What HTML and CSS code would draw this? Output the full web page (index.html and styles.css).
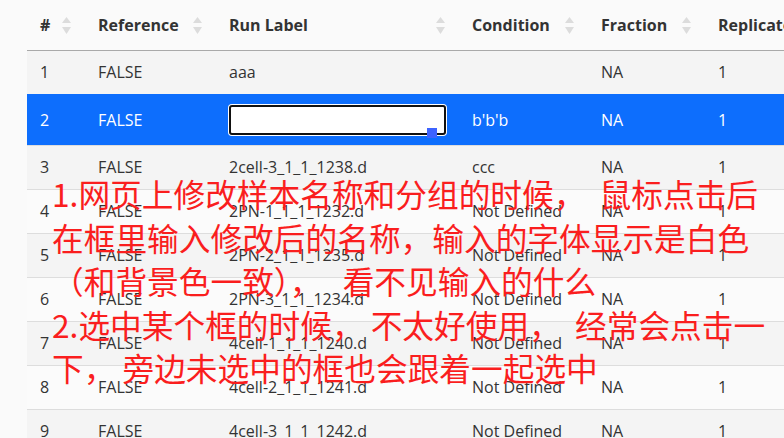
FILE: index.html
```html
<!DOCTYPE html>
<html lang="zh-CN">

<head>
    <meta charset="UTF-8">
    <meta name="viewport" content="width=device-width, initial-scale=1.0">
    <title>Sample Table</title>
    <link rel="stylesheet" href="styles.css">
</head>

<body>
    <div class="page">
        <table class="samples">
            <colgroup>
                <col class="c-num">
                <col class="c-ref">
                <col class="c-label">
                <col class="c-cond">
                <col class="c-frac">
                <col class="c-rep">
            </colgroup>
            <thead>
                <tr>
                    <th><div class="th-in"><span>#</span><svg class="sort" viewBox="0 0 9 18"><path d="M4.5 1 9 7H0z"/><path d="M0 11h9l-4.5 7z"/></svg></div></th>
                    <th><div class="th-in"><span>Reference</span><svg class="sort" viewBox="0 0 9 18"><path d="M4.5 1 9 7H0z"/><path d="M0 11h9l-4.5 7z"/></svg></div></th>
                    <th><div class="th-in"><span>Run Label</span><svg class="sort" viewBox="0 0 9 18"><path d="M4.5 1 9 7H0z"/><path d="M0 11h9l-4.5 7z"/></svg></div></th>
                    <th><div class="th-in"><span>Condition</span><svg class="sort" viewBox="0 0 9 18"><path d="M4.5 1 9 7H0z"/><path d="M0 11h9l-4.5 7z"/></svg></div></th>
                    <th><div class="th-in"><span>Fraction</span><svg class="sort" viewBox="0 0 9 18"><path d="M4.5 1 9 7H0z"/><path d="M0 11h9l-4.5 7z"/></svg></div></th>
                    <th><div class="th-in"><span>Replicate</span><svg class="sort" viewBox="0 0 9 18"><path d="M4.5 1 9 7H0z"/><path d="M0 11h9l-4.5 7z"/></svg></div></th>
                </tr>
            </thead>
            <tbody>
                <tr>
                    <td>1</td><td>FALSE</td><td>aaa</td><td></td><td>NA</td><td>1</td>
                </tr>
                <tr class="selected">
                    <td>2</td><td>FALSE</td>
                    <td class="editing"><span class="editor"><input type="text" value=""><span class="fill-handle"></span></span></td>
                    <td>b'b'b</td><td>NA</td><td>1</td>
                </tr>
                <tr>
                    <td>3</td><td>FALSE</td><td>2cell-3_1_1_1238.d</td><td>ccc</td><td>NA</td><td>1</td>
                </tr>
                <tr>
                    <td>4</td><td>FALSE</td><td>2PN-1_1_1_1232.d</td><td>Not Defined</td><td>NA</td><td>1</td>
                </tr>
                <tr>
                    <td>5</td><td>FALSE</td><td>2PN-2_1_1_1235.d</td><td>Not Defined</td><td>NA</td><td>1</td>
                </tr>
                <tr>
                    <td>6</td><td>FALSE</td><td>2PN-3_1_1_1234.d</td><td>Not Defined</td><td>NA</td><td>1</td>
                </tr>
                <tr>
                    <td>7</td><td>FALSE</td><td>4cell-1_1_1_1240.d</td><td>Not Defined</td><td>NA</td><td>1</td>
                </tr>
                <tr>
                    <td>8</td><td>FALSE</td><td>4cell-2_1_1_1241.d</td><td>Not Defined</td><td>NA</td><td>1</td>
                </tr>
                <tr>
                    <td>9</td><td>FALSE</td><td>4cell-3_1_1_1242.d</td><td>Not Defined</td><td>NA</td><td>1</td>
                </tr>
            </tbody>
        </table>

        <div class="note">1.网页上修改样本名称和分组的时候，  鼠标点击后
在框里输入修改后的名称，输入的字体显示是白色
（和背景色一致），   看不见输入的什么
2.选中某个框的时候， 不太好使用，  经常会点击一
下， 旁边未选中的框也会跟着一起选中</div>
    </div>
</body>

</html>
```

FILE: styles.css
```css
html,
body {
    margin: 0;
    padding: 0;
    background-color: #fafafa;
    overflow: hidden;
}

.page {
    position: relative;
    padding-left: 27px;
    font-family: "Open Sans", "Noto Sans", sans-serif;
    color: #333333;
}

.samples {
    table-layout: fixed;
    width: 808px;
    border-collapse: collapse;
    font-size: 16px;
    line-height: 23px;
}

.c-num { width: 58px; }
.c-ref { width: 131px; }
.c-label { width: 243px; }
.c-cond { width: 129px; }
.c-frac { width: 117px; }
.c-rep { width: 130px; }

th {
    height: 50px;
    padding: 0 14px 0 13px;
    text-align: left;
    font-weight: bold;
    white-space: nowrap;
    border-bottom: 1px solid #a9a9a9;
}

.th-in {
    display: flex;
    align-items: center;
    justify-content: space-between;
}

.sort {
    width: 9px;
    height: 18px;
    flex: none;
    fill: #dcdcdc;
}

td {
    padding: 10px 13px;
    white-space: nowrap;
    border-top: 1px solid #dddddd;
}

tbody tr:first-child td {
    border-top: none;
}

tbody tr:nth-child(odd) {
    background-color: #f4f4f4;
}

tbody tr:nth-child(even) {
    background-color: #fbfbfb;
}

tbody tr.selected {
    background-color: #0d6efd;
}

tr.selected td {
    color: #ffffff;
    border-top-color: #0d6efd;
}

.editing {
    padding-left: 13px;
}

.editor {
    position: relative;
    display: block;
    width: 217px;
    height: 30px;
}

.editor input {
    display: block;
    box-sizing: border-box;
    width: 217px;
    height: 30px;
    margin: 0;
    padding: 0 6px;
    border: 2px solid #111111;
    border-radius: 3px;
    background-color: #ffffff;
    color: #ffffff;
    box-shadow: 0 0 0 1px #ffffff;
    outline: none;
    font-family: inherit;
    font-size: 16px;
}

.fill-handle {
    position: absolute;
    right: 9px;
    bottom: -3px;
    width: 10px;
    height: 10px;
    background-color: #3d63ff;
}

.note {
    position: absolute;
    left: 52px;
    top: 172px;
    font-family: "Noto Sans CJK SC", sans-serif;
    font-size: 31.7px;
    line-height: 43.5px;
    color: #fa1e1e;
    white-space: pre;
}
```
